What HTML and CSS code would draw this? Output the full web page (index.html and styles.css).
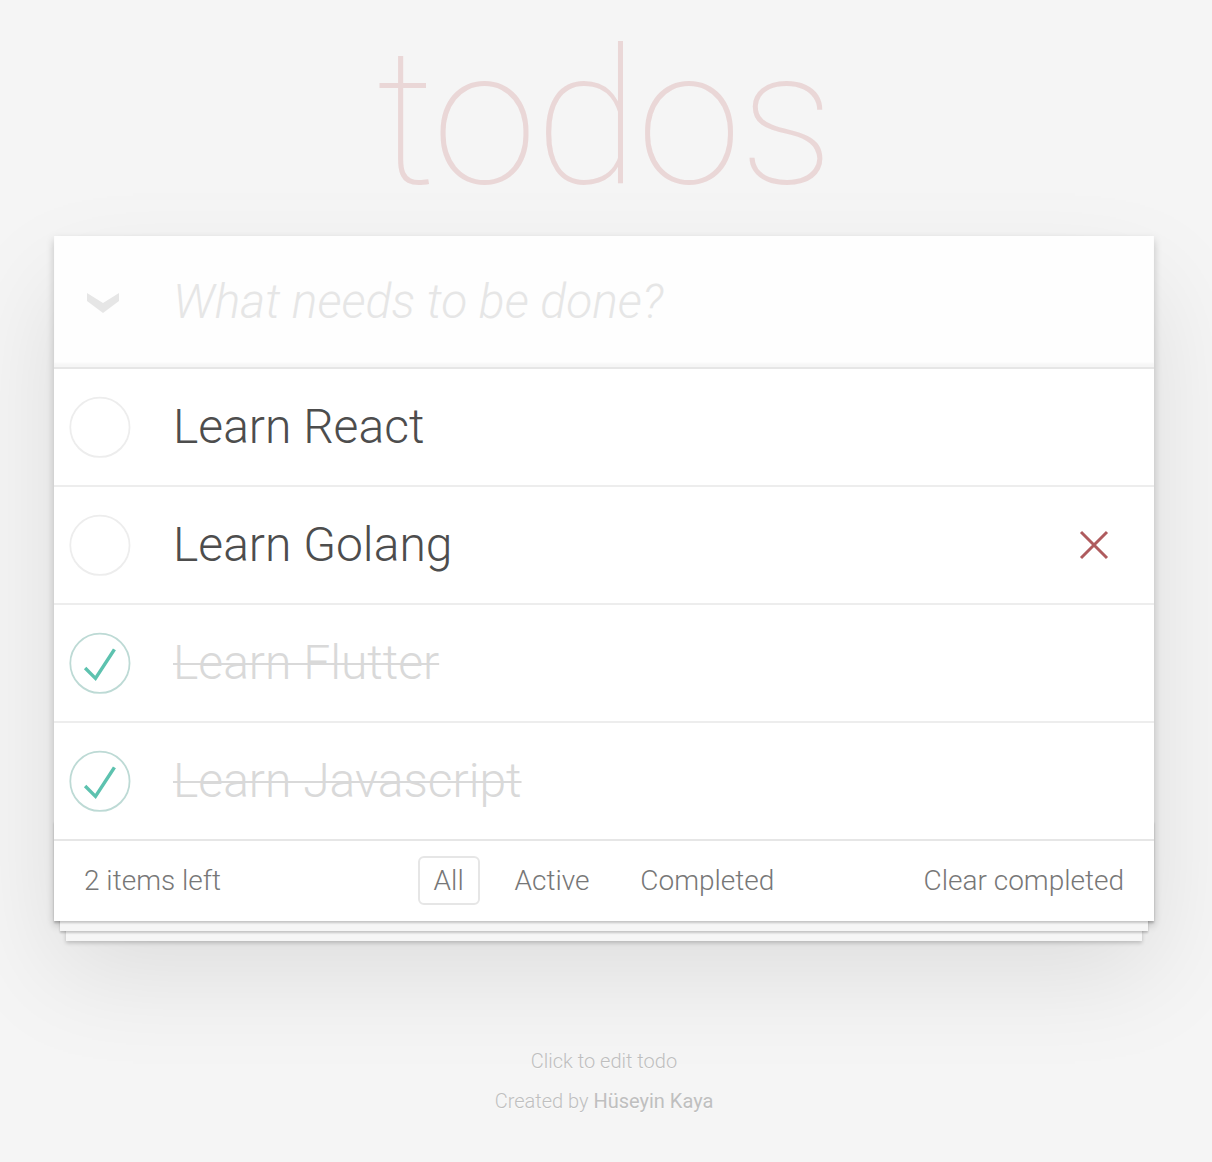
FILE: index.html
```html
<!DOCTYPE html>
<html lang="en">
<head>
<meta charset="utf-8">
<title>todos</title>
<link rel="stylesheet" href="styles.css">
</head>
<body>
<div class="page">
  <header class="title-area">
    <h1 class="title">todos</h1>
  </header>
  <section class="todoapp">
    <header class="new-row">
      <span class="toggle-all">
        <svg width="34" height="22" viewBox="0 0 34 22"><polygon points="1,1 17,11 33,1 33,9 17,21 1,9" fill="#e6e6e6"/></svg>
      </span>
      <input class="new-todo" placeholder="What needs to be done?">
    </header>
    <section class="main">
      <ul class="todo-list">
        <li class="todo">
          <span class="toggle">
            <svg width="80" height="80" viewBox="-10 -18 100 135"><circle cx="50" cy="50" r="50" fill="none" stroke="#ededed" stroke-width="3"/></svg>
          </span>
          <label class="todo-label">Learn React</label>
        </li>
        <li class="todo">
          <span class="toggle">
            <svg width="80" height="80" viewBox="-10 -18 100 135"><circle cx="50" cy="50" r="50" fill="none" stroke="#ededed" stroke-width="3"/></svg>
          </span>
          <label class="todo-label">Learn Golang</label>
          <button class="destroy" aria-label="Delete">
            <svg width="30" height="30" viewBox="0 0 30 30"><path d="M2 2 L28 28 M28 2 L2 28" stroke="#af5b5e" stroke-width="3" fill="none"/></svg>
          </button>
        </li>
        <li class="todo completed">
          <span class="toggle">
            <svg width="80" height="80" viewBox="-10 -18 100 135"><circle cx="50" cy="50" r="50" fill="none" stroke="#bddad5" stroke-width="3"/><path fill="#5dc2af" d="M72 25L42 71 27 56l-4 4 20 20 34-52z"/></svg>
          </span>
          <label class="todo-label">Learn Flutter</label>
        </li>
        <li class="todo completed">
          <span class="toggle">
            <svg width="80" height="80" viewBox="-10 -18 100 135"><circle cx="50" cy="50" r="50" fill="none" stroke="#bddad5" stroke-width="3"/><path fill="#5dc2af" d="M72 25L42 71 27 56l-4 4 20 20 34-52z"/></svg>
          </span>
          <label class="todo-label">Learn Javascript</label>
        </li>
      </ul>
    </section>
    <footer class="footer">
      <span class="todo-count"><strong>2</strong> items left</span>
      <ul class="filters">
        <li><a class="selected" href="#/">All</a></li>
        <li><a href="#/active">Active</a></li>
        <li><a href="#/completed">Completed</a></li>
      </ul>
      <div class="clear-wrap"><button class="clear-completed">Clear completed</button></div>
    </footer>
  </section>
  <footer class="info">
    <p>Click to edit todo</p>
    <p>Created by <a href="#">Hüseyin Kaya</a></p>
  </footer>
</div>
</body>
</html>
```
FILE: styles.css
```css
html, body {
  margin: 0;
  padding: 0;
}

body {
  background: #f5f5f5;
  color: #4d4d4d;
  font-family: "Roboto", "Helvetica Neue", Helvetica, Arial, sans-serif;
  font-weight: 300;
  font-size: 28px;
  line-height: 39.2px;
  -webkit-font-smoothing: antialiased;
}

.page {
  width: 1100px;
  margin: 0 0 0 54px;
}

.title-area {
  height: 236px;
  box-sizing: border-box;
  padding-top: 7px;
}

.title {
  margin: 0;
  font-family: "Roboto", "Helvetica Neue", sans-serif;
  font-weight: 100;
  font-size: 190px;
  line-height: normal;
  letter-spacing: -2px;
  text-align: center;
  color: rgba(175, 47, 47, 0.15);
  text-rendering: optimizeLegibility;
}

.todoapp {
  background: #fff;
  position: relative;
  box-shadow: 0 4px 8px 0 rgba(0, 0, 0, 0.2), 0 50px 100px 0 rgba(0, 0, 0, 0.1);
}

.new-row {
  display: flex;
  align-items: center;
  background: rgba(0, 0, 0, 0.003);
  box-shadow: inset 0 -4px 2px rgba(0, 0, 0, 0.03);
}

.toggle-all {
  width: 119px;
  flex: none;
  display: flex;
  align-items: center;
  padding-left: 32px;
  box-sizing: border-box;
  padding-top: 2px;
}

.toggle-all svg {
  display: block;
}

.new-todo {
  flex: 1;
  min-width: 0;
  margin: 0;
  border: none;
  outline: none;
  background: transparent;
  font-family: inherit;
  font-weight: 300;
  font-size: 48px;
  line-height: 67.2px;
  height: 131.2px;
  box-sizing: border-box;
  padding: 32px 32px 32px 0;
  color: #4d4d4d;
}

.new-todo::placeholder {
  font-style: italic;
  font-weight: 300;
  color: #e6e6e6;
}

.main {
  border-top: 2px solid #e6e6e6;
}

.todo-list {
  margin: 0;
  padding: 0;
  list-style: none;
}

.todo {
  display: flex;
  align-items: center;
  border-bottom: 2px solid #ededed;
  font-size: 48px;
}

.todo:last-child {
  border-bottom: none;
}

.toggle {
  width: 80px;
  height: 80px;
  flex: none;
}

.toggle svg {
  display: block;
}

.todo-label {
  flex: 1;
  display: block;
  padding: 30px 30px 30px 39px;
  line-height: 56px;
  word-break: break-all;
  color: #4d4d4d;
}

.completed .todo-label {
  color: #d9d9d9;
  text-decoration: line-through;
  text-decoration-thickness: 2px;
}

.destroy {
  flex: none;
  width: 80px;
  height: 80px;
  margin-right: 20px;
  padding: 0;
  border: none;
  background: none;
  display: flex;
  align-items: center;
  justify-content: center;
}

.footer {
  position: relative;
  color: #777;
  padding: 20px 30px;
  height: 40px;
  border-top: 2px solid #e6e6e6;
  display: grid;
  grid-template-columns: minmax(0, 1fr) auto minmax(0, 1fr);
  align-items: center;
  line-height: 40px;
}

.footer::before {
  content: '';
  position: absolute;
  right: 0;
  bottom: 0;
  left: 0;
  height: 100px;
  overflow: hidden;
  box-shadow:
    0 2px 2px rgba(0, 0, 0, 0.2),
    0 16px 0 -6px #f6f6f6,
    0 18px 2px -6px rgba(0, 0, 0, 0.2),
    0 32px 0 -12px #f6f6f6,
    0 34px 4px -12px rgba(0, 0, 0, 0.2);
  pointer-events: none;
}

.todo-count {
  text-align: left;
}

.todo-count strong {
  font-weight: 300;
}

.filters {
  margin: 0;
  padding: 0;
  list-style: none;
  white-space: nowrap;
}

.filters li {
  display: inline;
}

.filters a {
  color: inherit;
  margin: 6px;
  padding: 6px 14px;
  text-decoration: none;
  border: 2px solid transparent;
  border-radius: 6px;
}

.filters a.selected {
  border-color: #e6e6e6;
}

.clear-wrap {
  text-align: right;
}

.clear-completed {
  margin: 0;
  padding: 0;
  border: none;
  background: none;
  font: inherit;
  font-weight: 300;
  color: inherit;
  line-height: 40px;
  cursor: pointer;
}

.info {
  margin: 130px auto 0;
  color: #bfbfbf;
  font-size: 20px;
  text-shadow: 0 1px 0 rgba(255, 255, 255, 0.5);
  text-align: center;
}

.info p {
  line-height: 20px;
  margin: 20px 0;
}

.info a {
  color: inherit;
  text-decoration: none;
  font-weight: 400;
}
```
